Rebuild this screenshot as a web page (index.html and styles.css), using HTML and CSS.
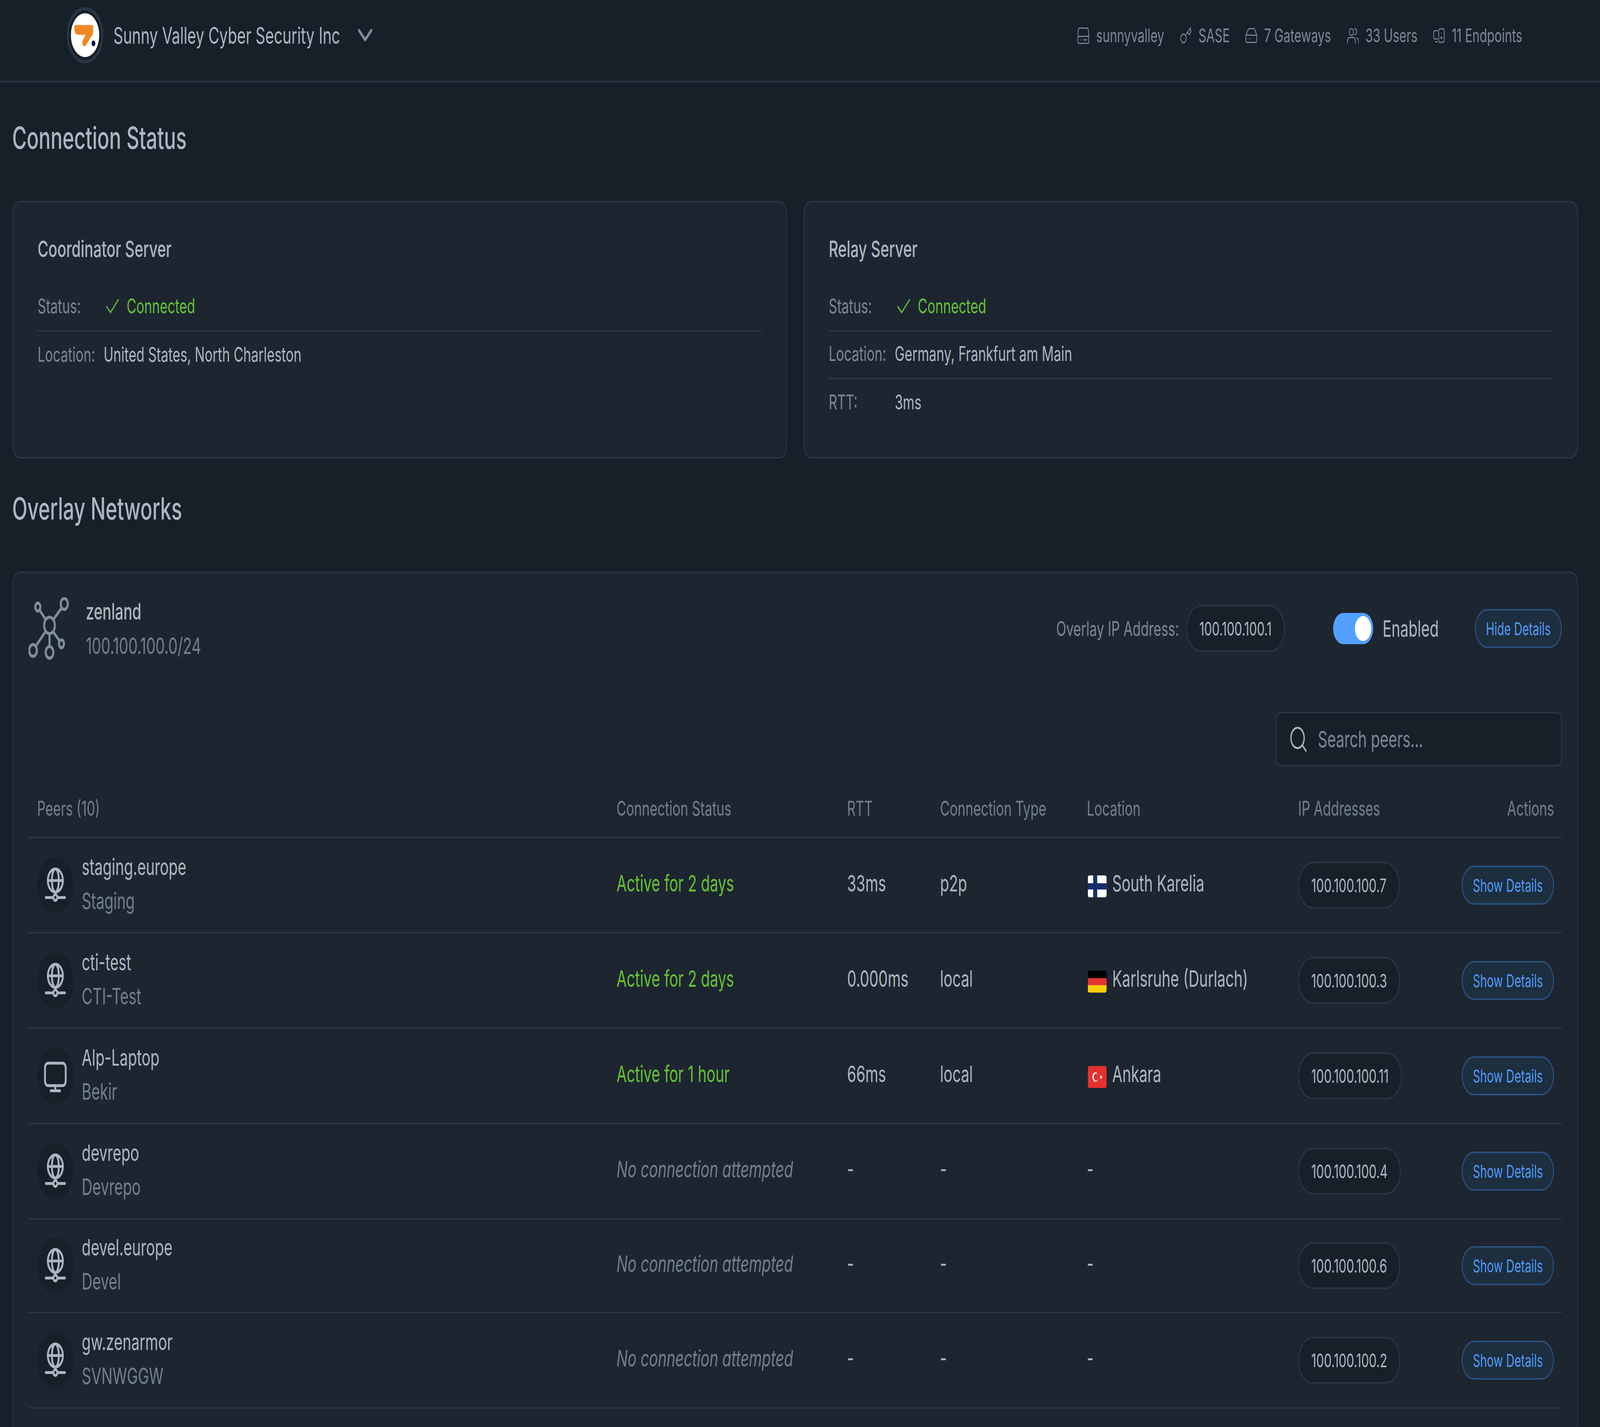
FILE: index.html
```html
<!DOCTYPE html>
<html lang="en">

<head>
  <meta charset="UTF-8">
  <title>Sunny Valley Cyber Security Inc</title>
  <link rel="stylesheet" href="styles.css">
</head>

<body>
  <svg class="sprite" width="0" height="0">
    <defs>
      <symbol id="globe" viewBox="0 0 24 24" fill="none" stroke="currentColor" stroke-width="1.8" stroke-linecap="round">
        <circle cx="12" cy="9" r="7.4"/>
        <ellipse cx="12" cy="9" rx="3.4" ry="7.4"/>
        <path d="M4.6 9h14.8M12 16.4v1.4M2.6 19.9h6.9M14.5 19.9h6.9"/>
        <circle cx="12" cy="19.9" r="1.9"/>
      </symbol>
      <symbol id="monitor" viewBox="0 0 24 24" fill="none" stroke="currentColor" stroke-width="1.8" stroke-linecap="round">
        <rect x="1.8" y="3.9" width="20.4" height="14.4" rx="3"/>
        <path d="M12 18.3v3.2M7.4 21.6h9.2"/>
      </symbol>
    </defs>
  </svg>

  <div class="frame">
    <header class="topbar">
      <div class="org">
        <div class="org-logo">
          <svg viewBox="0 0 112 112" width="112" height="112">
            <circle cx="56" cy="56" r="56" fill="#fff"/>
            <path fill="#ee8825" d="M17 30H85Q88 30 88 34V46Q88 50 86 54L63 78Q60 84 54 84Q46 84 45 76V72L58 55H30Q14 55 14 40V33Q14 30 17 30Z"/>
            <circle cx="89" cy="77" r="7.5" fill="#0a0a45"/>
          </svg>
        </div>
        <span class="org-name">Sunny Valley Cyber Security Inc</span>
        <svg class="org-caret" viewBox="0 0 56 32" width="56" height="32" fill="none" stroke="currentColor" stroke-width="8" stroke-linecap="round" stroke-linejoin="round"><path d="M4 4l24 24L52 4"/></svg>
      </div>
      <div class="stats">
        <span class="stat">
          <svg viewBox="0 0 52 48" width="52" height="48" fill="none" stroke="currentColor" stroke-width="3" stroke-linecap="round"><path d="M13 6H42Q46 6 47 10L49 28V40Q49 45 44 45H11Q6 45 6 40V28L8 10Q9 6 13 6Z"/><path d="M6.5 30Q8 27 12 27H43Q47 27 48.5 30M16 36h.1M28 36H41"/></svg>
          sunnyvalley
        </span>
        <span class="stat">
          <svg viewBox="0 0 52 48" width="52" height="48" fill="none" stroke="currentColor" stroke-width="3" stroke-linecap="round" stroke-linejoin="round"><circle cx="18.7" cy="32.3" r="11"/><path d="M27 24L47 4.7M35 17l7 6 7-10-6.5-5"/></svg>
          SASE
        </span>
        <span class="stat">
          <svg viewBox="0 0 52 48" width="52" height="48" fill="none" stroke="currentColor" stroke-width="3" stroke-linecap="round" stroke-linejoin="round"><path d="M17 7.5H40L49.5 24V38Q49.5 42.5 45 42.5H11Q6.5 42.5 6.5 38V24ZM6.5 24H49.5M15.3 33h.1M24.3 33h.1"/></svg>
          7 Gateways
        </span>
        <span class="stat">
          <svg viewBox="0 0 52 48" width="52" height="48" fill="none" stroke="currentColor" stroke-width="3" stroke-linecap="round"><circle cx="23" cy="16.3" r="8.5"/><path d="M36.3 6.7Q43.7 9 43.7 15T36.3 23.3M7.5 44V40Q7.5 30 17 30H29Q38.7 30 38.7 40V44M44.5 31Q51 33 51 40V44"/></svg>
          33 Users
        </span>
        <span class="stat">
          <svg viewBox="0 0 52 48" width="52" height="48" fill="none" stroke="currentColor" stroke-width="3" stroke-linecap="round"><path d="M22 12.5H12Q7 12.5 7 17V29Q7 33.5 12 33.5H22M14 41H21"/><rect x="27" y="8" width="21.7" height="34.3" rx="5"/><path d="M37.7 19h.1"/><circle cx="37.7" cy="30.7" r="2"/></svg>
          11 Endpoints
        </span>
      </div>
    </header>

    <main class="page">
      <h2 class="section-title">Connection Status</h2>

      <div class="status-grid">
        <section class="card status-card">
          <h3 class="status-title">Coordinator Server</h3>
          <div class="status-row status-row-line">
            <span class="status-label">Status:</span>
            <span class="status-ok">
              <svg viewBox="0 0 52 38" width="52" height="38" fill="none" stroke="currentColor" stroke-width="4"><path d="M2 20l16 16L50 2"/></svg>
              Connected
            </span>
          </div>
          <div class="status-row">
            <span class="status-label">Location:</span>
            <span class="status-value">United States, North Charleston</span>
          </div>
        </section>

        <section class="card status-card">
          <h3 class="status-title">Relay Server</h3>
          <div class="status-row status-row-line">
            <span class="status-label">Status:</span>
            <span class="status-ok">
              <svg viewBox="0 0 52 38" width="52" height="38" fill="none" stroke="currentColor" stroke-width="4"><path d="M2 20l16 16L50 2"/></svg>
              Connected
            </span>
          </div>
          <div class="status-row status-row-line">
            <span class="status-label">Location:</span>
            <span class="status-value">Germany, Frankfurt am Main</span>
          </div>
          <div class="status-row">
            <span class="status-label">RTT:</span>
            <span class="status-value">3ms</span>
          </div>
        </section>
      </div>

      <h2 class="section-title">Overlay Networks</h2>

      <section class="card network">
        <div class="network-head">
          <svg class="network-icon" viewBox="0 0 160 160" width="160" height="160" fill="none" stroke="currentColor" stroke-width="8">
            <circle cx="83" cy="72" r="21"/>
            <circle cx="37" cy="25" r="10"/>
            <circle cx="141" cy="17" r="14"/>
            <circle cx="18" cy="136" r="15"/>
            <circle cx="83" cy="141" r="15"/>
            <circle cx="130" cy="119" r="10"/>
            <path d="M44 33l24 24M98 57l33-30M68 87l-39 38M83 93v33M97 88l25 23"/>
          </svg>
          <div class="network-name">
            <div class="network-title">zenland</div>
            <div class="network-cidr">100.100.100.0/24</div>
          </div>
          <div class="network-actions">
            <span class="overlay-label">Overlay IP Address:</span>
            <span class="ip-pill">100.100.100.1</span>
            <span class="toggle"><span class="toggle-knob"></span></span>
            <span class="toggle-label">Enabled</span>
            <button class="details-btn">Hide Details</button>
          </div>
        </div>

        <div class="search-wrap">
          <div class="search">
            <svg viewBox="0 0 66 66" width="66" height="66" fill="none" stroke="#adb5c0" stroke-width="5" stroke-linecap="round"><circle cx="30" cy="30" r="26"/><path d="M49 49l14 14"/></svg>
            <span class="search-text">Search peers...</span>
          </div>
        </div>

        <div class="peer-table">
          <div class="peer-row peer-head">
            <div class="cell-name">Peers (10)</div>
            <div>Connection Status</div>
            <div>RTT</div>
            <div>Connection Type</div>
            <div>Location</div>
            <div>IP Addresses</div>
            <div class="cell-actions">Actions</div>
          </div>

          <div class="peer-row">
            <div class="cell-name">
              <span class="avatar"><svg width="96" height="96"><use href="#globe"/></svg></span>
              <div><div class="peer-name">staging.europe</div><div class="peer-sub">Staging</div></div>
            </div>
            <div class="cell-text active">Active for 2 days</div>
            <div class="cell-text">33ms</div>
            <div class="cell-text">p2p</div>
            <div class="cell-text cell-location">
              <svg class="flag" viewBox="0 0 74 56" width="74" height="56"><rect width="74" height="56" fill="#fff"/><path fill="#162e6e" d="M21 0h16v56H21zM0 20h74v16H0z"/></svg>
              South Karelia
            </div>
            <div><span class="ip-pill">100.100.100.7</span></div>
            <div class="cell-actions"><button class="details-btn">Show Details</button></div>
          </div>

          <div class="peer-row">
            <div class="cell-name">
              <span class="avatar"><svg width="96" height="96"><use href="#globe"/></svg></span>
              <div><div class="peer-name">cti-test</div><div class="peer-sub">CTI-Test</div></div>
            </div>
            <div class="cell-text active">Active for 2 days</div>
            <div class="cell-text">0.000ms</div>
            <div class="cell-text">local</div>
            <div class="cell-text cell-location">
              <svg class="flag" viewBox="0 0 74 56" width="74" height="56"><rect width="74" height="19" fill="#000"/><rect y="19" width="74" height="19" fill="#e53330"/><rect y="37" width="74" height="19" fill="#f6cd08"/></svg>
              Karlsruhe (Durlach)
            </div>
            <div><span class="ip-pill">100.100.100.3</span></div>
            <div class="cell-actions"><button class="details-btn">Show Details</button></div>
          </div>

          <div class="peer-row">
            <div class="cell-name">
              <span class="avatar"><svg width="96" height="96"><use href="#monitor"/></svg></span>
              <div><div class="peer-name">Alp-Laptop</div><div class="peer-sub">Bekir</div></div>
            </div>
            <div class="cell-text active">Active for 1 hour</div>
            <div class="cell-text">66ms</div>
            <div class="cell-text">local</div>
            <div class="cell-text cell-location">
              <svg class="flag" viewBox="0 0 74 56" width="74" height="56"><rect width="74" height="56" fill="#e5302d"/><circle cx="30" cy="28" r="12" fill="#fff"/><circle cx="33" cy="28" r="9.5" fill="#e5302d"/><path fill="#fff" d="M52 22l1.6 4.4 4.6.1-3.7 2.8 1.4 4.5-3.9-2.7-3.9 2.7 1.4-4.5-3.7-2.8 4.6-.1z"/></svg>
              Ankara
            </div>
            <div><span class="ip-pill">100.100.100.11</span></div>
            <div class="cell-actions"><button class="details-btn">Show Details</button></div>
          </div>

          <div class="peer-row">
            <div class="cell-name">
              <span class="avatar"><svg width="96" height="96"><use href="#globe"/></svg></span>
              <div><div class="peer-name">devrepo</div><div class="peer-sub">Devrepo</div></div>
            </div>
            <div class="cell-text idle">No connection attempted</div>
            <div class="cell-text">-</div>
            <div class="cell-text">-</div>
            <div class="cell-text">-</div>
            <div><span class="ip-pill">100.100.100.4</span></div>
            <div class="cell-actions"><button class="details-btn">Show Details</button></div>
          </div>

          <div class="peer-row peer-row-short">
            <div class="cell-name">
              <span class="avatar"><svg width="96" height="96"><use href="#globe"/></svg></span>
              <div><div class="peer-name">devel.europe</div><div class="peer-sub">Devel</div></div>
            </div>
            <div class="cell-text idle">No connection attempted</div>
            <div class="cell-text">-</div>
            <div class="cell-text">-</div>
            <div class="cell-text">-</div>
            <div><span class="ip-pill">100.100.100.6</span></div>
            <div class="cell-actions"><button class="details-btn">Show Details</button></div>
          </div>

          <div class="peer-row">
            <div class="cell-name">
              <span class="avatar"><svg width="96" height="96"><use href="#globe"/></svg></span>
              <div><div class="peer-name">gw.zenarmor</div><div class="peer-sub">SVNWGGW</div></div>
            </div>
            <div class="cell-text idle">No connection attempted</div>
            <div class="cell-text">-</div>
            <div class="cell-text">-</div>
            <div class="cell-text">-</div>
            <div><span class="ip-pill">100.100.100.2</span></div>
            <div class="cell-actions"><button class="details-btn">Show Details</button></div>
          </div>
        </div>
      </section>
    </main>
  </div>
</body>

</html>
```
FILE: styles.css
```css
html,
body {
  margin: 0;
  width: 100vw;
  height: 100vh;
  background: #171f29;
  overflow: clip;
}

.sprite {
  position: absolute;
}

.frame {
  width: 6301px;
  height: 3653px;
  overflow: hidden;
  color: #adb5c0;
  font-family: "Inter", "Liberation Sans", sans-serif;
  font-size: 58px;
}

/* the browser caps its window at 4096px wide: fit the 6301px layout into it */
@media (max-width: 4096px) {
  .frame {
    transform-origin: 0 0;
    transform: scaleX(0.65005);
  }
}

.topbar {
  height: 180px;
  padding: 0 306px 27px 263px;
  display: flex;
  align-items: center;
  justify-content: space-between;
  border-bottom: 4px solid #293545;
}

.org {
  display: flex;
  align-items: center;
}

.org-logo {
  width: 128px;
  height: 128px;
  border: 8px solid #293545;
  border-radius: 50%;
  display: flex;
  align-items: center;
  justify-content: center;
}

.org-name {
  margin-left: 40px;
  margin-right: 70px;
  font-size: 59px;
}

.org-caret {
  color: #7f8e9c;
}

.stats {
  display: flex;
  gap: 57px;
  color: #7a8794;
  font-size: 48px;
}

.stat {
  display: flex;
  align-items: center;
  gap: 26px;
}

.page {
  padding: 94px 86px 0 48px;
}

.section-title {
  margin: 0 0 113px;
  font-size: 78px;
  line-height: 96px;
  font-weight: 500;
}

.status-grid {
  display: grid;
  grid-template-columns: 1fr 1fr;
  gap: 64px;
  margin-bottom: 80px;
}

.card {
  background: #1d2530;
  border: 4px solid #293545;
  border-radius: 32px;
}

.status-card {
  height: 660px;
  box-sizing: border-box;
  padding: 83px 96px 0;
}

.status-title {
  margin: 0 0 54px;
  font-size: 58px;
  line-height: 72px;
  font-weight: 500;
}

.status-row {
  height: 122px;
  box-sizing: border-box;
  padding-bottom: 6px;
  display: flex;
  align-items: center;
  font-size: 52px;
}

.status-row-line {
  border-bottom: 4px solid #293545;
}

.status-label {
  width: 260px;
  color: #7a8794;
}

.status-ok {
  display: flex;
  align-items: center;
  gap: 30px;
  margin-left: 9px;
  color: #65c232;
}

.network {
  height: 2189px;
  box-sizing: border-box;
  padding: 0 60px;
  border-bottom: 0;
  border-radius: 32px 32px 0 0;
}

.network-head {
  display: flex;
  align-items: center;
  padding: 54px 0;
}

.network-icon {
  color: #7f8e9c;
}

.network-name {
  margin-left: 66px;
  line-height: 88px;
}

.network-title {
  font-weight: 500;
}

.network-cidr {
  color: #717f8d;
}

.network-actions {
  margin-left: auto;
  display: flex;
  align-items: center;
}

.overlay-label {
  font-size: 52px;
  color: #7a8794;
  margin-right: 28px;
}

.ip-pill {
  display: inline-flex;
  align-items: center;
  height: 120px;
  box-sizing: border-box;
  padding: 0 48px;
  background: #171f29;
  border: 4px solid #293545;
  border-radius: 60px;
  font-size: 48px;
  color: #adb5c0;
}

.toggle {
  width: 158px;
  height: 80px;
  margin-left: 190px;
  border-radius: 40px;
  background: #53a0ff;
  display: flex;
  align-items: center;
  justify-content: flex-end;
  padding-right: 8px;
  box-sizing: border-box;
}

.toggle-knob {
  width: 64px;
  height: 64px;
  border-radius: 50%;
  background: #fff;
}

.toggle-label {
  margin-left: 37px;
  margin-right: 142px;
}

.details-btn {
  height: 100px;
  box-sizing: border-box;
  padding: 0 40px;
  background: #1d2e3f;
  border: 4px solid #2a5080;
  border-radius: 50px;
  color: #4e9cf8;
  font-family: inherit;
  font-size: 45px;
}

.search-wrap {
  display: flex;
  justify-content: flex-end;
  margin-top: 71px;
}

.search {
  width: 1127px;
  height: 140px;
  box-sizing: border-box;
  padding-left: 52px;
  display: flex;
  align-items: center;
  gap: 44px;
  background: #171f29;
  border: 4px solid #293545;
  border-radius: 20px;
}

.search-text {
  color: #7a8794;
}

.peer-table {
  margin-top: 34px;
}

.peer-row {
  display: grid;
  grid-template-columns: 2316px 908px 366px 578px 832px 620px 420px;
  align-items: center;
  height: 244px;
  box-sizing: border-box;
  border-bottom: 4px solid #293545;
}

.peer-row-short {
  height: 240px;
}

.peer-head {
  height: 150px;
  font-size: 52px;
  color: #717f8d;
}

.cell-name {
  padding-left: 34px;
  display: flex;
  align-items: center;
  gap: 32px;
}

.cell-actions {
  padding-right: 32px;
  display: flex;
  justify-content: flex-end;
}

.cell-text {
  margin-top: -10px;
}

.cell-location {
  display: flex;
  align-items: center;
  gap: 22px;
}

.flag {
  border-radius: 6px;
  margin: 16px 0 0 4px;
}

.avatar {
  width: 144px;
  height: 144px;
  flex: none;
  border-radius: 50%;
  background: #171f29;
  display: flex;
  align-items: center;
  justify-content: center;
}

.peer-name,
.peer-sub {
  line-height: 87px;
}

.peer-sub {
  padding-bottom: 6px;
  color: #717f8d;
}

.active {
  color: #65c232;
}

.idle {
  color: #717f8d;
  font-style: italic;
}
```
